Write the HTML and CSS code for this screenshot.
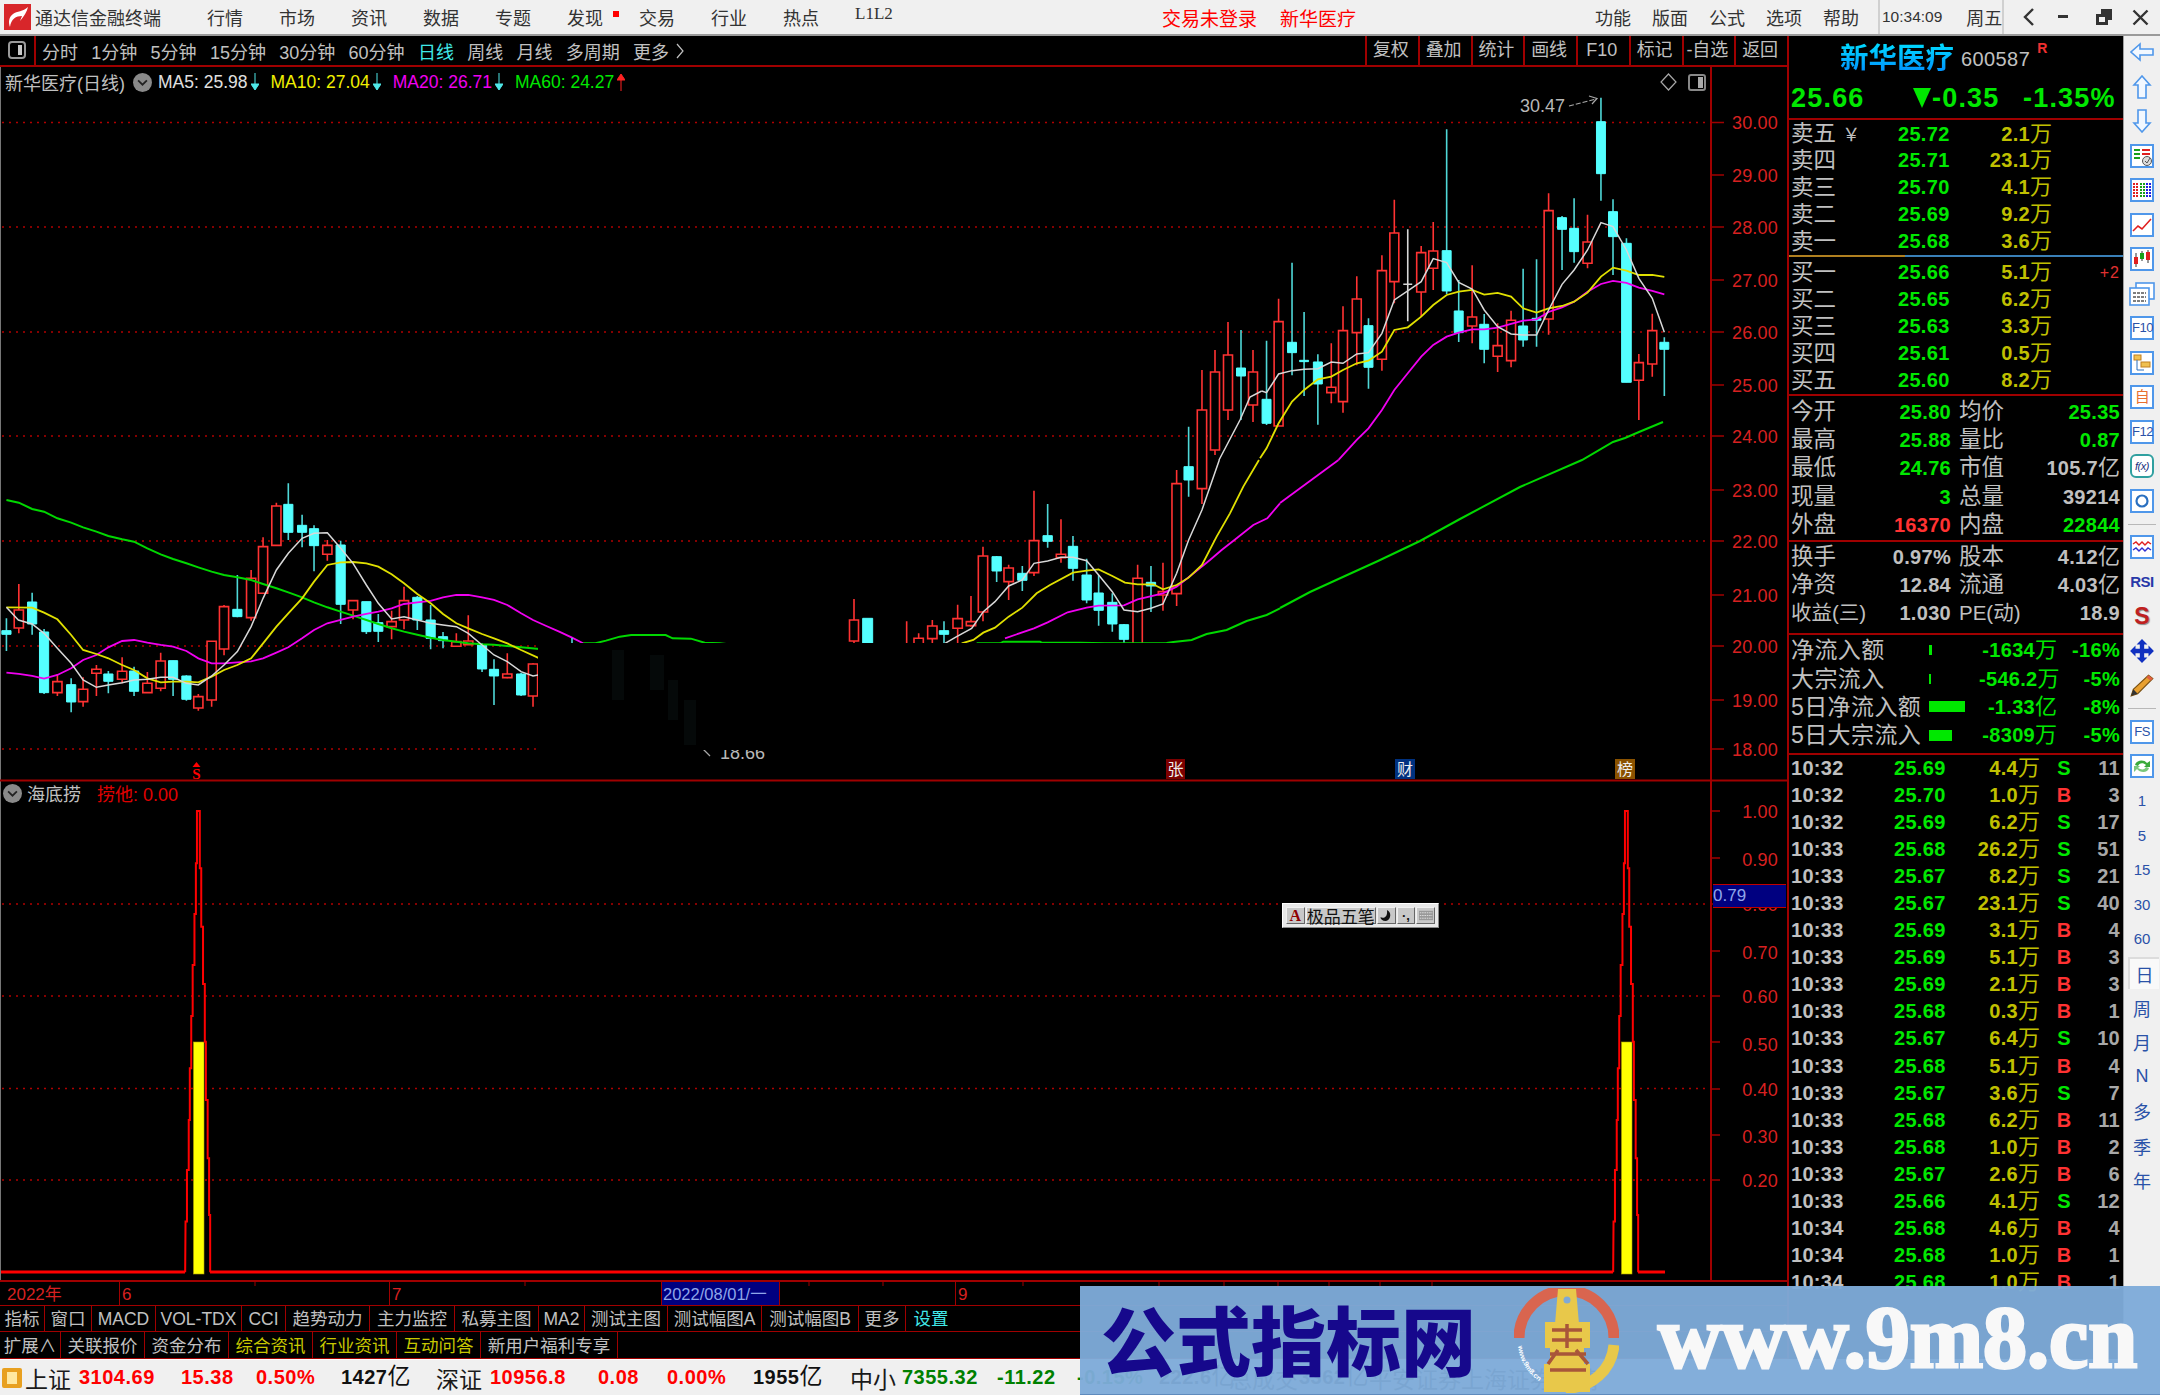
FILE: index.html
```html
<!DOCTYPE html>
<html lang="zh-CN">
<head>
<meta charset="utf-8">
<title>通达信金融终端</title>
<link rel="stylesheet" href="styles.css">
</head>
<body>
<header class="titlebar">
  <svg class="logo" viewBox="0 0 27 26"><rect width="27" height="26" fill="#d8262a"/><path d="M6 23C7 15 12 12 18 12L16 17C20 12 23 8 24 3C19 8 13 7 9 10C5 13 4 18 6 23Z" fill="#fff"/></svg>
  <span class="appname">通达信金融终端</span>
  <nav class="menu">
    <span>行情</span><span>市场</span><span>资讯</span><span>数据</span><span>专题</span><span class="has-dot">发现</span><span>交易</span><span>行业</span><span>热点</span><span class="serif">L1L2</span>
  </nav>
  <div class="login"><span>交易未登录</span><span>新华医疗</span></div>
  <nav class="menu2"><span>功能</span><span>版面</span><span>公式</span><span>选项</span><span>帮助</span></nav>
  <div class="clock"><span class="time">10:34:09</span><span>周五</span></div>
  <div class="winbtns">
    <svg viewBox="0 0 12 18" class="wb-back"><path d="M10 1L2 9L10 17" fill="none" stroke="#333" stroke-width="2.4"/></svg>
    <svg viewBox="0 0 10 4" class="wb-min"><rect width="10" height="3" fill="#333"/></svg>
    <svg viewBox="0 0 18 18" class="wb-max"><path d="M6 1H17V12H13V6H6Z M1 6H13V17H1Z M4 9V14H10V9Z" fill="#333" fill-rule="evenodd"/></svg>
    <svg viewBox="0 0 17 17" class="wb-close"><path d="M1.5 1.5L15.5 15.5M15.5 1.5L1.5 15.5" stroke="#333" stroke-width="2.4"/></svg>
  </div>
</header>

<div class="workspace">
  <main class="left">
    <div class="toolbar">
      <div class="tb-icon"><svg viewBox="0 0 18 18"><rect x="1" y="1" width="16" height="16" rx="3" fill="none" stroke="#9a9a9a" stroke-width="2"/><rect x="10" y="4" width="4" height="10" fill="#c8c8c8"/></svg></div>
      <div class="periods">
        <span>分时</span><span>1分钟</span><span>5分钟</span><span>15分钟</span><span>30分钟</span><span>60分钟</span><span class="on">日线</span><span>周线</span><span>月线</span><span>多周期</span><span class="more">更多<svg viewBox="0 0 8 16"><path d="M1 1L7 8L1 15" fill="none" stroke="#c0c0c0" stroke-width="1.2"/></svg></span>
      </div>
      <div class="tools"><span>复权</span><span>叠加</span><span>统计</span><span>画线</span><span>F10</span><span>标记</span><span>-自选</span><span>返回</span></div>
    </div>

    <div class="chart">
      <svg class="plot" viewBox="0 67 1787 1215" width="1787" height="1215">
        <rect x="0" y="67" width="1" height="1215" fill="#777"/>
        <!-- grid -->
        <path class="dots" d="M2 122.5H1711M2 227H1711M2 332H1711M2 436H1711M2 541H1711M2 646H1711M2 749H1711M2 904H1711M2 996H1711M2 1088.5H1711M2 1180H1711"/>
        <!-- 18.66 low marker, cut by the cover -->
        <text class="note" x="720" y="759">18.66</text>
        <path class="thin-grey" d="M703 749L710 756"/>
        <!-- candles, left part -->
        <g transform="translate(0,470) scale(.4591,.3333)">
          <path class="wick-red" d="M41 342V490M125 612V678M181 622V710M210 585V678M266 562V640M321 606V668M350 548V664M432 672V722M461 514V710M488 405V556M547 300V452M573 202V372M602 98V228M713 210V272M769 392V448M853 422V508M880 350V478M994 490V530M1020 436V525M1105 550V625M1161 580V710"/>
          <path class="body-red" d="M31 420H51V474H31ZM115 635H135V668H115ZM171 658H191V695H171ZM200 598H220V610H200ZM256 604H276V628H256ZM311 640H331V668H311ZM340 573H360V655H340ZM422 680H442V714H422ZM451 514H471V690H451ZM478 410H498V537H478ZM537 325H557V443H537ZM563 230H583V370H563ZM592 108H612V226H592ZM703 226H723V253H703ZM759 392H779V420H759ZM843 455H863V470H843ZM870 392H890V450H870ZM984 515H1004V529H984ZM1010 513H1030V524H1010ZM1095 612H1115V623H1095ZM1151 582H1171V678H1151Z"/>
          <path class="wick-cy" d="M14 445V543M70 368V494M96 477V672M155 625V727M236 603V670M292 590V678M377 572V678M406 616V692M517 315V442M628 40V210M658 134V232M684 166V304M742 212V462M798 395V492M824 432V516M909 378V480M938 405V538M965 486V535M1050 520V606M1076 568V705M1135 608V678"/>
          <path class="body-cy" d="M4 482H24V493H4ZM60 396H80V462H60ZM86 486H106V668H86ZM145 644H165V696H145ZM226 612H246V634H226ZM282 603H302V664H282ZM367 572H387V628H367ZM396 618H416V688H396ZM507 418H527V440H507ZM618 103H638V187H618ZM648 166H668V187H648ZM674 176H694V227H674ZM732 225H752V403H732ZM788 395H808V485H788ZM814 458H834V484H814ZM899 382H919V450H899ZM928 450H948V505H928ZM955 500H975V512H955ZM1040 524H1060V597H1040ZM1066 598H1086V618H1066ZM1125 612H1145V675H1125Z"/>
          <polyline class="ma-green" points="14,90 41,98 70,117 96,125 125,145 155,158 181,172 210,185 236,198 266,208 292,215 321,235 350,253 377,267 406,280 432,292 461,305 488,315 517,322 547,330 573,342 602,355 628,367 658,382 684,397 713,412 742,425 769,437 798,450 824,462 853,475 880,485 909,494 938,503 965,510 994,515 1020,520 1050,523 1076,524 1105,528 1135,532 1175,537"/>
          <polyline class="ma-green" points="1270,520 1297,520 1320,512 1350,500 1375,495 1450,495 1465,505 1505,506 1535,518 1568,520 1600,525"/>
          <polyline class="ma-magenta" points="14,608 41,612 70,618 96,626 125,615 155,595 181,570 210,555 236,532 266,513 292,510 321,518 350,525 377,530 406,543 432,565 461,580 488,580 517,577 547,574 573,565 602,548 628,532 658,505 684,480 713,460 742,450 769,440 798,432 824,425 853,415 880,402 909,397 938,393 965,382 994,375 1020,375 1050,382 1076,390 1105,405 1135,430 1161,450 1190,468 1218,485 1246,503 1270,520"/>
          <polyline class="ma-yellow" points="14,412 70,413 96,428 125,448 155,495 181,540 210,552 236,565 266,585 292,600 321,625 350,637 377,635 406,635 432,637 461,620 488,600 517,585 547,565 573,520 602,470 628,430 658,385 684,335 713,285 742,277 769,276 798,280 824,290 853,313 880,340 909,372 938,400 965,432 994,460 1020,475 1050,492 1076,505 1105,520 1135,540 1175,565"/>
          <polyline class="ma-white" points="14,412 40,450 70,462 96,490 125,535 155,580 181,630 210,652 236,645 266,638 292,630 321,628 350,622 377,622 406,640 432,645 461,618 488,585 517,545 547,470 573,385 602,300 628,250 658,205 684,190 713,188 742,235 769,280 798,345 824,400 853,447 880,440 909,450 938,460 965,465 994,470 1020,490 1050,525 1076,555 1105,575 1135,605 1161,618 1175,614"/>
        </g>
        <!-- candles, middle -->
        <g transform="translate(860,460) scale(.3333)">
          <path class="wick-red" d="M140 484V552M176 520V552M217 480V552M293 434V552M333 408V500M369 260V484M446 314V420M522 92V348M603 178V308M833 314V552M909 308V452M950 30V438M1026 -270V132"/>
          <path class="body-red" d="M162 535H190V552H162ZM203 498H231V536H203ZM279 476H307V505H279ZM319 485H347V497H319ZM355 288H383V456H355ZM432 324H460V365H432ZM508 242H536V338H508ZM589 283H617V293H589ZM819 355H847V552H819ZM895 395H923V405H895ZM936 71H964V401H936ZM1012 -150H1040V86H1012Z"/>
          <path class="wick-cy" d="M252 484V552M410 288V366M487 318V393M563 132V263M639 228V362M680 296V430M716 345V497M757 400V515M792 492V552M873 318V456M986 -100V110"/>
          <path class="body-cy" d="M8 475H38V552H8ZM238 512H266V523H238ZM396 290H424V333H396ZM473 340H501V361H473ZM549 227H577V244H549ZM625 259H653V325H625ZM666 345H694V420H666ZM702 399H730V451H702ZM743 427H771V492H743ZM778 494H806V538H778ZM859 367H887V378H859ZM972 20H1000V60H972Z"/>
          <polyline class="ma-green" points="350,550 420,550 430,545 540,545 545,548 660,548 735,550 855,550 920,549 940,546 995,540 1040,522 1100,510 1160,483 1220,465 1260,445"/>
          <polyline class="ma-magenta" points="435,535 522,505 563,487 623,457 680,443 716,437 792,436 833,418 909,400 950,380 986,352 1050,300 1085,270 1130,235 1180,195 1222,175 1260,130"/>
          <polyline class="ma-yellow" points="305,550 340,540 370,518 405,503 446,470 487,443 530,400 570,375 639,338 680,332 716,328 757,348 795,368 833,373 880,373 909,388 950,375 986,353 1026,315 1070,230 1110,160 1150,80 1197,0"/>
          <polyline class="ma-white" points="255,550 290,530 335,505 370,455 405,425 446,378 487,360 522,310 563,303 603,292 639,292 680,302 716,345 757,395 792,450 833,455 873,445 909,432 950,340 986,240 1026,150 1078,0"/>
        </g>
        <!-- candles and lines between the groups -->
        <path class="wick-red" d="M854 599V643M1215 350V455M1228 322V420M1253 350V422"/>
        <path class="body-red" d="M849.5 620H858.5V641H849.5ZM1210.5 372H1219.5V450H1210.5ZM1223.5 355H1232.5V410H1223.5ZM1248.5 372H1257.5V405H1248.5Z"/>
        <path class="wick-cy" d="M572 638V643M1241 330V420"/>
        <path class="body-cy" d="M1236.5 368H1245.5V376H1236.5Z"/>
        <polyline class="ma-magenta" points="1280,503 1338.5,460"/>
        <polyline class="ma-white" points="1219,460 1240,420 1250,397 1261.7,391"/>
        <polyline class="ma-green" points="1280,608 1310,592 1345,576 1378,561 1420,541 1460,519 1520,487 1582,460 1613,442 1625,438 1639,432 1663,422"/>
        <!-- candles, right part -->
        <g transform="translate(1260,100) scale(.3444,.3333)">
          <path class="wick-red" d="M54 596V978M207 730V910M241 619V938M281 529V796M354 466V812M390 299V610M468 438V650M503 366V570M616 496V730M690 670V816M729 632V802M838 280V704M951 344V505M1100 762V960M1139 641V830"/>
          <path class="body-red" d="M41 665H67V978H41ZM194 862H220V878H194ZM228 692H254V905H228ZM268 597H294V698H268ZM341 512H367V778H341ZM377 399H403V545H377ZM455 458H481V576H455ZM490 453H516V505H490ZM603 651H629V678H603ZM677 737H703V769H677ZM716 661H742V782H716ZM825 332H851V657H825ZM938 426H964V490H938ZM1087 788H1113V841H1087ZM1126 692H1152V792H1126Z"/>
          <path class="wick-cy" d="M19 722V975M93 488V826M128 636V888M168 763V974M315 655V866M542 88V582M577 540V726M651 642V790M764 506V740M803 478V740M877 348V510M912 295V488M990 -7V302M1025 298V525M1064 415V847M1174 712V888"/>
          <path class="body-cy" d="M6 898H32V970H6ZM80 727H106V758H80ZM115 781H141V785H115ZM155 786H181V852H155ZM302 677H328V802H302ZM529 452H555V573H529ZM564 633H590V698H564ZM638 673H664V748H638ZM751 678H777V720H751ZM790 655H816V661H790ZM864 353H890V388H864ZM899 385H925V455H899ZM977 65H1003V221H977ZM1012 335H1038V410H1012ZM1050 430H1078V847H1050ZM1161 727H1187V748H1161Z"/>
          <path class="doji" d="M429 388V664M416 553H442"/>
          <polyline class="ma-magenta" points="228,1080 281,1020 315,985 354,930 390,870 429,820 468,770 503,735 542,710 577,698 616,688 651,688 690,683 729,672 764,662 803,658 838,636 877,622 912,605 951,575 990,552 1025,543 1064,549 1100,563 1139,573 1174,583"/>
          <polyline class="ma-yellow" points="0,1075 19,1045 54,970 93,905 128,870 168,838 207,830 241,810 281,790 315,782 354,755 390,690 429,682 468,650 503,615 542,585 577,575 616,570 651,584 690,579 729,590 764,625 803,638 838,625 877,618 912,605 951,578 990,530 1025,503 1064,512 1100,525 1139,525 1174,531"/>
          <polyline class="ma-white" points="5,873 19,878 54,822 93,812 128,808 168,806 207,786 241,790 281,762 315,758 354,700 390,600 429,573 468,545 503,476 542,488 577,547 616,567 651,630 690,680 729,702 764,705 803,705 838,630 877,553 912,510 951,450 990,368 1025,380 1064,450 1100,535 1139,595 1174,697"/>
        </g>

        <!-- the black cover that hides the lower middle of the chart -->
        <rect class="cover" x="538" y="643" width="1173" height="107"/>
        <path class="ghost" d="M612 650H624V700H612ZM650 655H664V690H650ZM668 680H678V720H668ZM684 700H696V745H684Z"/>

        <!-- peak marker -->
        <text class="note" x="1520" y="112">30.47</text>
        <path class="thin-grey dash" d="M1569 106L1596 99"/>
        <path class="thin-grey" d="M1589 96L1597 98.5L1592 104"/>

        <!-- panel icons -->
        <path class="thin-grey" d="M1668.5 74L1676 82L1668.5 90L1661 82Z"/>
        <rect x="1689" y="75" width="16" height="15" rx="2" fill="none" stroke="#888" stroke-width="2"/>
        <rect x="1698" y="77" width="5" height="11" fill="#aaa"/>

        <!-- signals -->
        <path d="M196.5 762L200.5 767H192.5Z" fill="#f00"/>
        <text class="sig" x="196.5" y="779">S</text>
        <rect x="1166" y="759" width="19" height="20" fill="#7d0000"/>
        <text class="sigtxt" x="1175.5" y="775">张</text>
        <rect x="1395" y="759" width="20" height="20" fill="#00317f"/>
        <text class="sigtxt" x="1405" y="775">财</text>
        <rect x="1615" y="759" width="20" height="20" fill="#8a5200"/>
        <text class="sigtxt" x="1625" y="775">榜</text>

        <!-- frame -->
        <path class="frame" d="M0 780.5H1787M1711 67V1282M0 1281H1787"/>

        <!-- price axis -->
        <path class="frame-thin" d="M1711 122.5H1724M1711 175H1724M1711 227H1724M1711 280H1724M1711 332H1724M1711 385H1724M1711 436H1724M1711 490H1724M1711 541H1724M1711 595H1724M1711 646H1724M1711 700H1724M1711 749H1724M1711 811H1720M1711 858H1720M1711 904H1720M1711 951H1720M1711 996H1720M1711 1042H1720M1711 1089H1720M1711 1135H1720M1711 1180H1720"/>
        <text class="axis" x="1778" y="129">30.00</text>
        <text class="axis" x="1778" y="182">29.00</text>
        <text class="axis" x="1778" y="234">28.00</text>
        <text class="axis" x="1778" y="287">27.00</text>
        <text class="axis" x="1778" y="339">26.00</text>
        <text class="axis" x="1778" y="392">25.00</text>
        <text class="axis" x="1778" y="443">24.00</text>
        <text class="axis" x="1778" y="497">23.00</text>
        <text class="axis" x="1778" y="548">22.00</text>
        <text class="axis" x="1778" y="602">21.00</text>
        <text class="axis" x="1778" y="653">20.00</text>
        <text class="axis" x="1778" y="707">19.00</text>
        <text class="axis" x="1778" y="756">18.00</text>
        <text class="axis" x="1778" y="818">1.00</text>
        <text class="axis" x="1778" y="866">0.90</text>
        <text class="axis" x="1778" y="911">0.80</text>
        <text class="axis" x="1778" y="959">0.70</text>
        <text class="axis" x="1778" y="1003">0.60</text>
        <text class="axis" x="1778" y="1051">0.50</text>
        <text class="axis" x="1778" y="1096">0.40</text>
        <text class="axis" x="1778" y="1143">0.30</text>
        <text class="axis" x="1778" y="1187">0.20</text>

        <!-- indicator -->
        <path class="base" d="M1 1272H185M210 1272H1613M1638 1272H1665"/>
        <defs>
          <g id="spike">
            <rect class="bar" x="1621.5" y="1042" width="10.5" height="232"/>
            <g transform="translate(1240,780) scale(.3571,.3333)">
              <polyline class="spike" points="1045,1477 1046,1325 1050,1325 1050,1170 1055,1170 1055,1020 1058,1020 1058,865 1062,865 1062,708 1066,708 1066,555 1071,555 1071,402 1075,402 1075,250 1078,250 1078,93 1086,93 1086,265 1090,265 1090,440 1095,440 1095,612 1100,612 1100,785 1103,785 1103,960 1108,960 1108,1135 1112,1135 1112,1305 1115,1305 1115,1477"/>
            </g>
          </g>
        </defs>
        <use href="#spike"/>
        <use href="#spike" x="-1428"/>
      </svg>

      <div class="chart-head">
        <span class="hd-name">新华医疗(日线)</span>
        <span class="chev"><svg viewBox="0 0 10 6"><path d="M1 1L5 5L9 1" fill="none" stroke="#222" stroke-width="1.6"/></svg></span>
        <span class="ma m5">MA5: 25.98</span><svg class="arr" viewBox="0 0 8 18"><path d="M4 0V16M0 11L4 17L8 11Z" fill="#4fe8e8" stroke="#4fe8e8"/></svg>
        <span class="ma m10">MA10: 27.04</span><svg class="arr" viewBox="0 0 8 18"><path d="M4 0V16M0 11L4 17L8 11Z" fill="#4fe8e8" stroke="#4fe8e8"/></svg>
        <span class="ma m20">MA20: 26.71</span><svg class="arr" viewBox="0 0 8 18"><path d="M4 0V16M0 11L4 17L8 11Z" fill="#4fe8e8" stroke="#4fe8e8"/></svg>
        <span class="ma m60">MA60: 24.27</span><svg class="arr" viewBox="0 0 8 18"><path d="M4 18V2M0 7L4 1L8 7Z" fill="#f22" stroke="#f22"/></svg>
      </div>

      <div class="ind-head">
        <span class="chev"><svg viewBox="0 0 10 6"><path d="M1 1L5 5L9 1" fill="none" stroke="#222" stroke-width="1.6"/></svg></span>
        <span class="ind-name">海底捞</span>
        <span class="ind-val">捞他: 0.00</span>
      </div>

      <div class="valbox">0.79</div>

      <div class="ime">
        <span class="ime-a">A</span>
        <span class="ime-name">极品五笔</span>
        <span class="ime-btn"><svg viewBox="0 0 14 14"><path d="M8 1C13 3 13 11 7 13C3 13 1 11 1 9C6 11 9 7 8 1Z" fill="#111"/></svg></span>
        <span class="ime-btn ime-dots">·,</span>
        <span class="ime-btn"><svg viewBox="0 0 18 12"><rect width="18" height="12" fill="#999"/><path d="M1 2.5H17M1 6H17M1 9.5H17" stroke="#eee" stroke-dasharray="2 1"/></svg></span>
      </div>
    </div>

    <div class="timeaxis">
      <span class="tc c-year">2022年</span>
      <span class="tc c-6">6</span>
      <span class="tc c-7">7</span>
      <span class="tc c-date">2022/08/01/一</span>
      <span class="tc c-8"></span>
      <span class="tc c-9">9</span>
      <svg class="axisticks" viewBox="0 0 1711 4" width="1711" height="4"><path d="M255 0V4M525 0V4M809 0V4M883 0V4M1023 0V4M1159 0V4M1224 0V4M1278 0V4M1329 0V4M1380 0V4M1432 0V4" stroke="#a00000"/></svg>
    </div>
    <div class="tabs tabs-a">
      <span>指标</span><span>窗口</span><span>MACD</span><span>VOL-TDX</span><span>CCI</span><span>趋势动力</span><span>主力监控</span><span>私募主图</span><span>MA2</span><span>测试主图</span><span>测试幅图A</span><span>测试幅图B</span><span>更多</span><span class="cyan">设置</span>
    </div>
    <div class="tabs tabs-b">
      <span>扩展∧</span><span>关联报价</span><span>资金分布</span><span class="yel">综合资讯</span><span class="yel">行业资讯</span><span class="yel">互动问答</span><span>新用户福利专享</span>
    </div>
  </main>

  <aside class="quote">
    <div class="q-title"><span class="q-name">新华医疗</span><span class="q-code">600587</span><span class="q-r">R</span></div>
    <div class="q-price"><span>25.66</span><span class="q-chg"><svg viewBox="0 0 18 20"><path d="M0 0H18L9 20Z" fill="#00e800"/></svg>-0.35</span><span>-1.35%</span></div>

    <div class="q-sec sec-sell">
      <div class="ord"><span>卖五 <em>￥</em></span><b>25.72</b><b class="v">2.1<i>万</i></b></div>
      <div class="ord"><span>卖四</span><b>25.71</b><b class="v">23.1<i>万</i></b></div>
      <div class="ord"><span>卖三</span><b>25.70</b><b class="v">4.1<i>万</i></b></div>
      <div class="ord"><span>卖二</span><b>25.69</b><b class="v">9.2<i>万</i></b></div>
      <div class="ord"><span>卖一</span><b>25.68</b><b class="v">3.6<i>万</i></b></div>
    </div>
    <div class="q-divider"></div>
    <div class="q-sec sec-buy">
      <div class="ord"><span>买一</span><b>25.66</b><b class="v">5.1<i>万</i></b><b class="plus">+2</b></div>
      <div class="ord"><span>买二</span><b>25.65</b><b class="v">6.2<i>万</i></b></div>
      <div class="ord"><span>买三</span><b>25.63</b><b class="v">3.3<i>万</i></b></div>
      <div class="ord"><span>买四</span><b>25.61</b><b class="v">0.5<i>万</i></b></div>
      <div class="ord"><span>买五</span><b>25.60</b><b class="v">8.2<i>万</i></b></div>
    </div>

    <div class="q-sec sec-stat1">
      <div class="st"><span>今开</span><b class="g">25.80</b><span>均价</span><b class="g">25.35</b></div>
      <div class="st"><span>最高</span><b class="g">25.88</b><span>量比</span><b class="g">0.87</b></div>
      <div class="st"><span>最低</span><b class="g">24.76</b><span>市值</span><b>105.7<i>亿</i></b></div>
      <div class="st"><span>现量</span><b class="g">3</b><span>总量</span><b>39214</b></div>
      <div class="st"><span>外盘</span><b class="r">16370</b><span>内盘</span><b class="g">22844</b></div>
    </div>
    <div class="q-sec sec-stat2">
      <div class="st"><span>换手</span><b>0.97%</b><span>股本</span><b>4.12<i>亿</i></b></div>
      <div class="st"><span>净资</span><b>12.84</b><span>流通</span><b>4.03<i>亿</i></b></div>
      <div class="st"><span class="nowrap">收益(三)</span><b>1.030</b><span class="nowrap">PE(动)</span><b>18.9</b></div>
    </div>
    <div class="q-sec sec-flow">
      <div class="fl"><span>净流入额</span><u class="bar1"></u><b class="g">-1634<i>万</i></b><b class="g">-16%</b></div>
      <div class="fl"><span>大宗流入</span><u class="bar2"></u><b class="g">-546.2<i>万</i></b><b class="g">-5%</b></div>
      <div class="fl"><span>5日净流入额</span><u class="bar3"></u><b class="g">-1.33<i>亿</i></b><b class="g">-8%</b></div>
      <div class="fl"><span>5日大宗流入</span><u class="bar4"></u><b class="g">-8309<i>万</i></b><b class="g">-5%</b></div>
    </div>
    <div class="ticks">
      <div class="tk"><b>10:32</b><b class="g">25.69</b><b class="v">4.4<i>万</i></b><b class="s">S</b><b class="n">11</b></div>
      <div class="tk"><b>10:32</b><b class="g">25.70</b><b class="v">1.0<i>万</i></b><b class="r">B</b><b class="n">3</b></div>
      <div class="tk"><b>10:32</b><b class="g">25.69</b><b class="v">6.2<i>万</i></b><b class="s">S</b><b class="n">17</b></div>
      <div class="tk"><b>10:33</b><b class="g">25.68</b><b class="v">26.2<i>万</i></b><b class="s">S</b><b class="n">51</b></div>
      <div class="tk"><b>10:33</b><b class="g">25.67</b><b class="v">8.2<i>万</i></b><b class="s">S</b><b class="n">21</b></div>
      <div class="tk"><b>10:33</b><b class="g">25.67</b><b class="v">23.1<i>万</i></b><b class="s">S</b><b class="n">40</b></div>
      <div class="tk"><b>10:33</b><b class="g">25.69</b><b class="v">3.1<i>万</i></b><b class="r">B</b><b class="n">4</b></div>
      <div class="tk"><b>10:33</b><b class="g">25.69</b><b class="v">5.1<i>万</i></b><b class="r">B</b><b class="n">3</b></div>
      <div class="tk"><b>10:33</b><b class="g">25.69</b><b class="v">2.1<i>万</i></b><b class="r">B</b><b class="n">3</b></div>
      <div class="tk"><b>10:33</b><b class="g">25.68</b><b class="v">0.3<i>万</i></b><b class="r">B</b><b class="n">1</b></div>
      <div class="tk"><b>10:33</b><b class="g">25.67</b><b class="v">6.4<i>万</i></b><b class="s">S</b><b class="n">10</b></div>
      <div class="tk"><b>10:33</b><b class="g">25.68</b><b class="v">5.1<i>万</i></b><b class="r">B</b><b class="n">4</b></div>
      <div class="tk"><b>10:33</b><b class="g">25.67</b><b class="v">3.6<i>万</i></b><b class="s">S</b><b class="n">7</b></div>
      <div class="tk"><b>10:33</b><b class="g">25.68</b><b class="v">6.2<i>万</i></b><b class="r">B</b><b class="n">11</b></div>
      <div class="tk"><b>10:33</b><b class="g">25.68</b><b class="v">1.0<i>万</i></b><b class="r">B</b><b class="n">2</b></div>
      <div class="tk"><b>10:33</b><b class="g">25.67</b><b class="v">2.6<i>万</i></b><b class="r">B</b><b class="n">6</b></div>
      <div class="tk"><b>10:33</b><b class="g">25.66</b><b class="v">4.1<i>万</i></b><b class="s">S</b><b class="n">12</b></div>
      <div class="tk"><b>10:34</b><b class="g">25.68</b><b class="v">4.6<i>万</i></b><b class="r">B</b><b class="n">4</b></div>
      <div class="tk"><b>10:34</b><b class="g">25.68</b><b class="v">1.0<i>万</i></b><b class="r">B</b><b class="n">1</b></div>
      <div class="tk"><b>10:34</b><b class="g">25.68</b><b class="v">1.0<i>万</i></b><b class="r">B</b><b class="n">1</b></div>
    </div>
  </aside>

  <aside class="sidebar">
    <div class="sb first"><svg class="ic-arrow" viewBox="0 0 24 18"><path d="M10 1L1 9L10 17V12H23V6H10Z"/></svg></div>
    <div class="sb"><svg class="ic-arrow" viewBox="0 0 18 24"><path d="M9 1L1 10H5V23H13V10H17Z"/></svg></div>
    <div class="sb"><svg class="ic-arrow" viewBox="0 0 18 24"><path d="M9 23L1 14H5V1H13V14H17Z"/></svg></div>
    <div class="sb"><svg class="ic-box" viewBox="0 0 24 24"><rect x="1" y="1" width="22" height="22"/><path d="M4 6H10M4 10H10M4 14H10" stroke="#18a018" stroke-width="2"/><path d="M12 6H20M12 10H20" stroke="#e02020" stroke-width="2"/><circle cx="17" cy="17" r="4.5" fill="#ddd" stroke="#555"/><path d="M15 17L17 19L20 14" fill="none" stroke="#555"/></svg></div>
    <div class="sb"><svg class="ic-box" viewBox="0 0 24 24"><rect x="1" y="1" width="22" height="22"/><path d="M4 5V19M7 5V19" stroke="#e02020" stroke-width="2" stroke-dasharray="2 1"/><path d="M11 5V19M14 5V19" stroke="#18a018" stroke-width="2" stroke-dasharray="2 1"/><path d="M17 5V19M20 5V19" stroke="#2020e0" stroke-width="2" stroke-dasharray="2 1"/></svg></div>
    <div class="sb"><svg class="ic-box" viewBox="0 0 24 24"><rect x="1" y="1" width="22" height="22"/><path d="M3 18L8 13L12 16L21 6" fill="none" stroke="#e02020" stroke-width="1.6"/></svg></div>
    <div class="sb"><svg class="ic-box" viewBox="0 0 24 24"><rect x="1" y="1" width="22" height="22"/><path d="M6 6V20M12 4V14M18 3V16" stroke="#333"/><rect x="4" y="10" width="4" height="7" fill="#e02020"/><rect x="10" y="6" width="4" height="6" fill="#18a018"/><rect x="16" y="5" width="4" height="8" fill="#e02020"/></svg></div>
    <div class="sb"><svg class="ic-plain" viewBox="0 0 26 24"><rect x="7" y="1" width="18" height="16"/><rect x="1" y="6" width="19" height="17"/><path d="M4 11H17M4 15H17M4 19H17" stroke="#555" stroke-dasharray="3 1"/></svg></div>
    <div class="sb"><span class="ic-txt">F10</span></div>
    <div class="sb"><svg class="ic-box" viewBox="0 0 24 24"><rect x="1" y="1" width="22" height="22"/><rect x="4" y="4" width="7" height="5" fill="#f0c050" stroke="#c08020"/><rect x="11" y="11" width="9" height="5" fill="#f0c050" stroke="#c08020"/><path d="M7 9V19H14" fill="none" stroke="#2a70c0"/></svg></div>
    <div class="sb"><span class="ic-txt ic-orange">自</span></div>
    <div class="sb"><span class="ic-txt">F12</span></div>
    <div class="sb"><span class="ic-txt ic-fx">f(x)</span></div>
    <div class="sb"><svg class="ic-box" viewBox="0 0 24 24"><rect x="1" y="1" width="22" height="22"/><circle cx="12" cy="12" r="5.5" fill="none" stroke="#2a70c0" stroke-width="2.2"/></svg></div>
    <div class="sb-sep"></div>
    <div class="sb"><svg class="ic-box" viewBox="0 0 24 24"><rect x="1" y="1" width="22" height="22"/><path d="M3 9L6 7L9 10L12 7L15 10L18 7L21 9" fill="none" stroke="#e02020" stroke-width="1.4"/><path d="M3 15L6 13L9 16L12 13L15 16L18 13L21 15" fill="none" stroke="#3030d0" stroke-width="1.4"/></svg></div>
    <div class="sb"><span class="ic-rsi">RSI</span></div>
    <div class="sb"><span class="ic-s">S</span></div>
    <div class="sb"><svg class="ic-move" viewBox="0 0 24 24"><path d="M12 1L17 6H14V10H18V7L23 12L18 17V14H14V18H17L12 23L7 18H10V14H6V17L1 12L6 7V10H10V6H7Z" fill="#1030c0"/></svg></div>
    <div class="sb"><svg class="ic-move" viewBox="0 0 24 24"><path d="M2 22L4 16L18 3L22 6L8 20Z" fill="#e8a030" stroke="#7a5010"/><path d="M16 5L20 8L22 6L18 3Z" fill="#e06040"/><path d="M2 22L4 16L8 20Z" fill="#333"/></svg></div>
    <div class="sb-sep"></div>
    <div class="sb"><span class="ic-txt">FS</span></div>
    <div class="sb"><svg class="ic-box" viewBox="0 0 24 24"><rect x="1" y="1" width="22" height="22"/><path d="M5 11C6 6 14 5 17 9L20 7V13H14L16 11C13 8 9 9 8 12Z" fill="#3aaa3a"/><path d="M19 14C18 19 10 19 7 15L4 18V12H10L8 14C11 16 15 16 16 13Z" fill="#7ac87a"/></svg></div>
    <div class="sb num">1</div><div class="sb num">5</div><div class="sb num">15</div><div class="sb num">30</div><div class="sb num">60</div>
    <div class="sb cn pressed">日</div><div class="sb cn">周</div><div class="sb cn">月</div><div class="sb cn">N</div><div class="sb cn">多</div><div class="sb cn">季</div><div class="sb cn">年</div>
  </aside>
</div>

<footer class="status">
  <svg class="st-icon" viewBox="0 0 20 20"><rect width="20" height="20" rx="2" fill="#e8a020"/><rect x="5" y="4" width="10" height="12" fill="#ffe8a0"/></svg>
  <span class="sn">上证</span><b class="up">3104.69</b><b class="up">15.38</b><b class="up">0.50%</b><b class="amt">1427<i>亿</i></b>
  <span class="sn">深证</span><b class="up">10956.8</b><b class="up">0.08</b><b class="up">0.00%</b><b class="amt">1955<i>亿</i></b>
  <span class="sn">中小</span><b class="dn">7355.32</b><b class="dn">-11.22</b><b class="dn">-0.15%</b><b class="amt">222.6<i>亿</i></b>
  <span class="sn">总成交</span><b class="amt">3362<i>亿</i></b><span class="sn">平安证券上海证券行情</span>
</footer>

<aside class="banner">
  <span class="bn-title">公式指标网</span>
  <svg class="bn-logo" viewBox="0 0 105 105">
    <path d="M5 50A47 47 0 0 1 100 50" fill="none" stroke="#d9654f" stroke-width="11"/>
    <path d="M100 57A47 47 0 0 1 52 100" fill="none" stroke="#e8c84a" stroke-width="11"/>
    <path d="M31 34H76V60H70V76H76V104H30V76H36V60H31Z" fill="#e8c84a"/>
    <path d="M44 1H62L65 36H41Z" fill="#e8c84a"/>
    <circle cx="53" cy="12" r="3.5" fill="#7fa9d6"/>
    <path d="M38 42H68M38 52H68M36 66H72M36 82H72M53 36V60M44 62L34 76M62 62L74 76" stroke="#a8563a" stroke-width="3.5"/>
    <path id="bn-arc" d="M4 58A49 49 0 0 0 40 100" fill="none"/>
    <text class="bn-small"><textPath href="#bn-arc">www.9m8.cn</textPath></text>
  </svg>
  <span class="bn-url">www.9m8.cn</span>
</aside>
</body>
</html>
```

FILE: styles.css
```css
* { box-sizing: border-box; }
html, body { margin: 0; padding: 0; }
body {
  position: relative;
  width: 2160px;
  height: 1395px;
  overflow: hidden;
  background: #000;
  font-family: "Liberation Sans", "Noto Sans CJK SC", sans-serif;
  display: flex;
  flex-direction: column;
}
i { font-style: normal; line-height: 0; }
svg { display: block; }

/* title bar */
.titlebar {
  height: 36px;
  flex: none;
  display: flex;
  align-items: center;
  background: #f0f0f0;
  border-bottom: 2px solid #9a9a9a;
  color: #333;
  font-size: 18px;
  padding-left: 4px;
}
.logo { width: 27px; height: 26px; flex: none; }
.appname { margin-left: 4px; width: 127px; flex: none; white-space: nowrap; }
.menu { display: flex; gap: 36px; margin-left: 45px; width: 684px; flex: none; white-space: nowrap; }
.menu span { flex: none; }
.has-dot { position: relative; }
.has-dot::after {
  content: "";
  position: absolute;
  left: 46px;
  top: 7px;
  width: 6px;
  height: 6px;
  background: #f00;
}
.serif { font-family: "Liberation Serif", serif; font-size: 17px; }
.login { display: flex; gap: 23px; margin-left: 271px; color: #f00; font-size: 19px; width: 195px; flex: none; white-space: nowrap; }
.menu2 { display: flex; gap: 21px; margin-left: 238px; flex: none; white-space: nowrap; }
.clock {
  display: flex;
  margin-left: 19px;
  height: 34px;
  width: 126px;
  flex: none;
  align-items: center;
  border-left: 2px solid #d0d0d0;
  border-right: 2px solid #d0d0d0;
  padding-left: 2px;
  gap: 24px;
  white-space: nowrap;
}
.time { font-size: 15.5px; }
.winbtns { display: flex; align-items: center; margin-left: 19px; }
.wb-back { width: 12px; height: 18px; }
.wb-min { width: 10px; height: 4px; margin-left: 23px; }
.wb-max { width: 18px; height: 18px; margin-left: 27px; }
.wb-close { width: 17px; height: 17px; margin-left: 19px; }

/* workspace */
.workspace { height: 1323px; flex: none; display: flex; }
.left { width: 1787px; flex: none; display: flex; flex-direction: column; }

.toolbar {
  height: 31px;
  flex: none;
  display: flex;
  align-items: center;
  border-bottom: 2px solid #a00000;
  color: #c0c0c0;
  font-size: 18px;
}
.tb-icon {
  width: 36px;
  height: 29px;
  flex: none;
  border-right: 2px solid #a00000;
  padding: 5px 0 0 8px;
}
.tb-icon svg { width: 18px; height: 18px; }
.periods { display: flex; gap: 13.3px; margin-left: 6px; white-space: nowrap; }
.periods .on { color: #40e8e8; }
.more { display: flex; align-items: center; gap: 7px; }
.more svg { width: 8px; height: 16px; }
.tools { display: grid; grid-template-columns: repeat(8, 52.75px); margin-left: auto; height: 29px; }
.tools span {
  border-left: 2px solid #a00000;
  text-align: center;
  line-height: 29px;
  padding-right: 3px;
  white-space: nowrap;
}

/* chart */
.chart { position: relative; height: 1215px; flex: none; }
.plot { display: block; }
.dots { stroke: #b00000; stroke-width: 1.5; stroke-dasharray: 2 5; fill: none; }
.wick-red, .wick-cy, .doji, .body-red, .body-cy,
.ma-white, .ma-yellow, .ma-magenta, .ma-green, .spike {
  vector-effect: non-scaling-stroke;
  fill: none;
}
.wick-red { stroke: #ff3232; stroke-width: 1.6; }
.wick-cy { stroke: #4fd8d8; stroke-width: 1.6; }
.body-red { fill: #000; stroke: #ff3232; stroke-width: 1.6; }
.body-cy { fill: #54ffff; stroke: #54ffff; stroke-width: 1; }
.doji { stroke: #d8d8d8; stroke-width: 1.6; }
.ma-white { stroke: #d8d8d8; stroke-width: 1.5; }
.ma-yellow { stroke: #e0e000; stroke-width: 1.8; }
.ma-magenta { stroke: #f000f0; stroke-width: 1.8; }
.ma-green { stroke: #00d800; stroke-width: 2; }
.cover { fill: #000; }
.ghost { fill: #050909; }
.note { font-size: 18px; fill: #b8b8b8; }
.thin-grey { fill: none; stroke: #a8a8a8; stroke-width: 1.2; }
.dash { stroke-dasharray: 5 2; }
.sig { font: bold 15px "Liberation Serif", serif; fill: #f00; text-anchor: middle; }
.sigtxt { font: 16px "Noto Sans CJK SC", sans-serif; fill: #eee; text-anchor: middle; }
.frame { stroke: #a00000; stroke-width: 2; fill: none; }
.frame-thin { stroke: #a00000; stroke-width: 1.5; fill: none; }
.axis { font-size: 18px; fill: #d82020; text-anchor: end; letter-spacing: .2px; }
.base { stroke: #f00; stroke-width: 3; fill: none; }
.spike { stroke: #f00; stroke-width: 2; }
.bar { fill: #ff0; stroke: #b0a000; stroke-width: .6; }

.chart-head {
  position: absolute;
  left: 5px;
  top: 0;
  height: 30px;
  display: flex;
  align-items: center;
  font-size: 18px;
  color: #c0c0c0;
  white-space: nowrap;
}
.chev {
  width: 19px;
  height: 19px;
  border-radius: 50%;
  background: #8a8a8a;
  display: flex;
  align-items: center;
  justify-content: center;
  flex: none;
}
.chev svg { width: 11px; height: 7px; }
.hd-name { width: 128px; }
.ma { font-size: 17.5px; margin-left: 6px; }
.arr { width: 8px; height: 18px; margin-left: 3px; flex: none; margin-right: 6px; }
.m5 { color: #e0e0e0; }
.m10 { color: #f0f000; }
.m20 { color: #f000f0; }
.m60 { color: #00e800; }

.ind-head {
  position: absolute;
  left: 3px;
  top: 715px;
  height: 22px;
  display: flex;
  align-items: center;
  font-size: 18px;
  color: #c0c0c0;
  white-space: nowrap;
}
.ind-name { margin-left: 5px; }
.ind-val { margin-left: 16px; color: #e00000; font-size: 18px; }

.valbox {
  position: absolute;
  left: 1713px;
  top: 817px;
  width: 73px;
  height: 24px;
  background: #000080;
  border-top: 1px solid #c00000;
  border-bottom: 1px solid #c00000;
  color: #8fa6ea;
  font-size: 17px;
  line-height: 22px;
}

.ime {
  position: absolute;
  left: 1282px;
  top: 836px;
  width: 157px;
  height: 25px;
  display: flex;
  align-items: stretch;
  gap: 1px;
  padding: 3px;
  background: #e8e8e8;
  border: 1px solid #fff;
  border-bottom-color: #888;
  border-right-color: #888;
  color: #111;
}
.ime > span {
  display: flex;
  align-items: center;
  justify-content: center;
  background: #c8c8c8;
  border: 1px solid #f0f0f0;
  border-right-color: #666;
  border-bottom-color: #666;
}
.ime-a { width: 19px; font: bold 16px "Liberation Serif", serif; color: #900000; }
.ime-name { width: 71px; font-size: 17px; white-space: nowrap; }
.ime-btn { width: 19px; }
.ime-btn svg { width: 14px; height: 13px; }
.ime-dots { font-size: 13px; font-weight: bold; }

/* time axis */
.timeaxis {
  position: relative;
  height: 24px;
  flex: none;
  display: grid;
  grid-template-columns: 120px 270px 272px 118px 176px 755px;
  border-bottom: 1px solid #a00000;
  color: #d82020;
  font-size: 17px;
  line-height: 25px;
}
.tc { padding-left: 2px; border-right: 1px solid #a00000; white-space: nowrap; overflow: hidden; }
.c-year { padding-left: 7px; }
.c-date { background: #000080; color: #8fa6ea; font-size: 16.5px; padding-left: 1px; }
.c-9 { border-right: 0; }
.axisticks { position: absolute; left: 0; top: 0; }

/* tab rows */
.tabs {
  flex: none;
  display: grid;
  border-bottom: 1px solid #a00000;
  color: #c0c0c0;
  font-size: 17.5px;
  text-align: center;
  white-space: nowrap;
}
.tabs span { border-right: 1px solid #a00000; }
.tabs-a { height: 26px; line-height: 23px; grid-template-columns: 45px 47px 64px 86px 44px 84px 85px 84px 46px 83px 94px 97px 47px 50px; }
.tabs-a span { padding-top: 2px; }
.tabs-b { height: 27px; line-height: 23px; grid-template-columns: 61px 84px 84px 84px 84px 84px 137px; }
.tabs-b span { padding-top: 3px; }
.tabs .cyan { color: #40e8e8; border-right: 0; }
.tabs .yel { color: #c8c800; }

/* quote panel */
.quote {
  width: 336px;
  flex: none;
  border-left: 2px solid #a00000;
  color: #c0c0c0;
  font-size: 22.5px;
  overflow: hidden;
  display: flex;
  flex-direction: column;
}
.quote b { font-size: 20px; letter-spacing: .3px; text-align: right; white-space: nowrap; }
.quote b i { font: 400 22px/0 "Noto Sans CJK SC", sans-serif; letter-spacing: 0; }
.quote span { white-space: nowrap; }
.q-title { height: 42px; flex: none; display: flex; align-items: center; padding: 0 0 4px 51px; }
.q-name {
  font-size: 28.5px;
  font-weight: 700;
  background: linear-gradient(#00f0ff, #0088ff);
  -webkit-background-clip: text;
  background-clip: text;
  color: transparent;
}
.q-code { font-size: 20px; margin-left: 7px; margin-top: 8px; letter-spacing: .4px; color: #c0c0c0; }
.q-r { font-size: 14px; font-weight: 700; color: #f03030; margin-left: 7px; margin-top: -14px; }
.q-price {
  height: 42px;
  flex: none;
  display: grid;
  grid-template-columns: 122px 110px 100px;
  align-items: center;
  padding-left: 2px;
  border-bottom: 2px solid #a00000;
  color: #00e800;
  font-weight: 700;
  font-size: 27px;
  letter-spacing: 1.2px;
}
.q-chg { display: flex; align-items: center; }
.q-chg svg { width: 18px; height: 20px; margin-right: 1px; }

.q-sec { flex: none; padding-left: 2px; }
.sec-sell { height: 135px; }
.q-divider {
  height: 2px;
  flex: none;
  background: linear-gradient(90deg, #b08020 116px, #3a80b8 116px);
}
.sec-buy { height: 139px; padding-top: 1.5px; border-bottom: 2px solid #a00000; }
.ord {
  height: 27px;
  display: grid;
  grid-template-columns: 107px 57px 97px 68px;
  align-items: center;
  line-height: 27px;
}
.ord b { color: #00e800; text-align: left; }
.ord em { font-style: normal; font-size: 18px; }
.ord .v { color: #c0c000; text-align: right; }
.quote .plus { color: #e03030; font-size: 16px; font-weight: 400; letter-spacing: 1px; text-align: right; }

.sec-stat1 { height: 146px; padding-top: 1.5px; border-bottom: 2px solid #a00000; }
.sec-stat2 { height: 93px; padding-top: .5px; border-bottom: 2px solid #a00000; }
.sec-flow { height: 120px; padding-top: 1px; border-bottom: 2px solid #a00000; }
.st {
  height: 28.4px;
  display: grid;
  grid-template-columns: 60px 100px 68px 101px;
  align-items: center;
  line-height: 28px;
}
.st > span:nth-child(3) { padding-left: 8px; }
.st .nowrap { font-size: 20.5px; }
.g { color: #00e800; }
.quote .r { color: #ff3232; }
.fl {
  height: 28.4px;
  display: grid;
  grid-template-columns: 138px 50px 78px 63px;
  align-items: center;
  line-height: 28px;
}
.fl > span { letter-spacing: .4px; font-size: 23px; }
.fl u { display: block; background: #00e800; }
.bar1 { width: 3px; height: 10px; }
.bar2 { width: 2px; height: 10px; }
.bar3 { width: 36px; height: 11px; }
.bar4 { width: 23px; height: 11px; }

.ticks { padding-left: 2px; }
.tk {
  height: 27.05px;
  display: grid;
  grid-template-columns: 103px 57px 89px 48px 32px;
  align-items: center;
  line-height: 27px;
}
.tk b:first-child { text-align: left; }
.tk .g { text-align: left; }
.tk .v { color: #c0c000; }
.quote .tk .s, .quote .tk .r { text-align: center; letter-spacing: 0; }
.tk .s { color: #00e800; }
.tk .n { color: #a8a8a8; }

/* side toolbar */
.sidebar {
  width: 37px;
  flex: none;
  background: #f0f0f0;
  border-left: 1px solid #a0a0a0;
  color: #2a52a8;
}
.sb {
  height: 34.5px;
  display: flex;
  align-items: center;
  justify-content: center;
}
.sb.first { margin-top: -1px; }
.sb-sep { height: 12px; display: flex; align-items: center; justify-content: center; }
.sb-sep::before { content: ""; width: 28px; height: 1px; background: #b8b8b8; }
.ic-arrow { width: 24px; height: 24px; fill: #f2f8ff; stroke: #4f97ea; stroke-width: 1.6; }
.ic-box { width: 24px; height: 24px; }
.ic-box > rect:first-child { fill: #fff; stroke: #4f97ea; stroke-width: 2; }
.ic-plain { width: 26px; height: 24px; fill: #fff; stroke: #4f97ea; stroke-width: 1.6; }
.ic-txt {
  width: 24px;
  height: 24px;
  border: 2px solid #4f97ea;
  background: #fff;
  color: #2a52a8;
  font-size: 13px;
  line-height: 20px;
  text-align: center;
  letter-spacing: -.5px;
  white-space: nowrap;
}
.ic-orange { color: #e87030; font-size: 15px; }
.ic-fx { border-radius: 6px; border-color: #30a0a0; font-style: italic; font-size: 11px; color: #203080; }
.ic-rsi { font-size: 15px; font-weight: 700; color: #2838a8; letter-spacing: -.5px; }
.ic-s { font: bold 23px "Liberation Sans", sans-serif; color: #c02020; text-shadow: 1px 1px 1px #888; }
.ic-move { width: 26px; height: 26px; }
.sb.num { font-size: 15px; }
.sb.cn { font-size: 18px; }
.sb.pressed {
  background: #f9f9f9;
  border: 2px solid #dcdcdc;
  border-right: 0;
  border-bottom: 0;
  margin: 1px 0 1.5px 4px;
  width: 31px;
  height: 32px;
}

/* status bar */
.status {
  height: 36px;
  flex: none;
  display: grid;
  grid-template-columns: 25px 54px 102px 75px 85px 95px 54px 108px 69px 86px 97px 52px 95px 80px 82px 70px 70px 70px auto;
  align-items: center;
  background: #f0f0f0;
  color: #1a1a1a;
  font-size: 23px;
  white-space: nowrap;
  border-top: 1px solid #fff;
}
.st-icon { width: 20px; height: 20px; margin-left: 2px; }
.status b { font-size: 20px; letter-spacing: .5px; }
.status b i { font: 400 23px/0 "Noto Sans CJK SC", sans-serif; letter-spacing: 0; }
.sn { font-size: 23px; }
.up { color: #f00; }
.dn { color: #008000; }
.amt { color: #111; }

/* watermark banner */
.banner {
  position: absolute;
  left: 1080px;
  top: 1286px;
  width: 1080px;
  height: 109px;
  display: flex;
  align-items: center;
  background: rgba(126, 171, 217, .96);
  border-bottom: 1px solid #5f8bbd;
  white-space: nowrap;
}
.bn-title {
  margin-left: 21px;
  width: 413px;
  padding-bottom: 5px;
  font: 900 75px/1 "Noto Sans CJK SC", sans-serif;
  color: #16088c;
}
.bn-logo { width: 105px; height: 105px; flex: none; }
.bn-small { font: bold 7px "Liberation Sans", sans-serif; fill: #fff; }
.bn-url {
  margin-left: 39px;
  padding-bottom: 5px;
  font: bold 88px/1 "Liberation Serif", serif;
  color: #f8f8f8;
  -webkit-text-stroke: 3px #f8f8f8;
}
```
